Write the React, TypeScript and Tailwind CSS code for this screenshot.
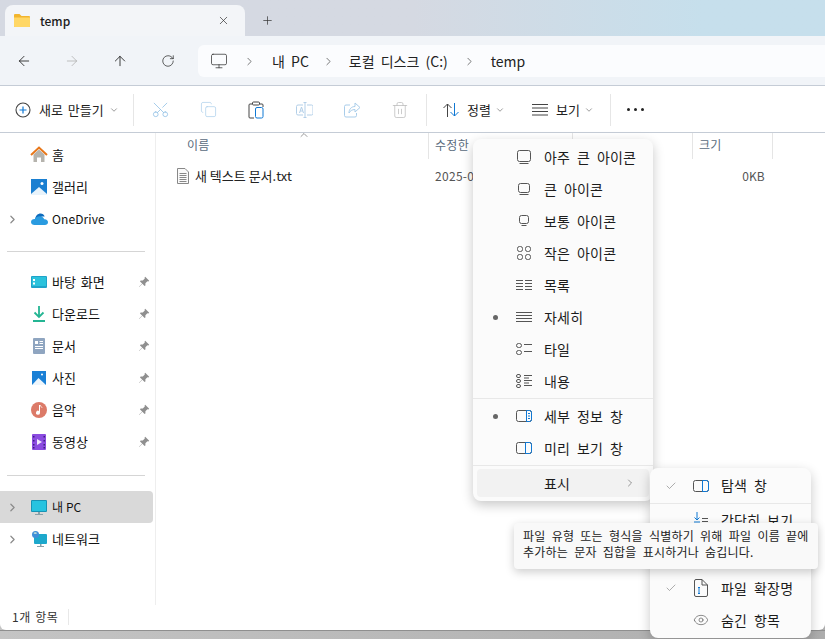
import React from "react";
import { ArrowLeft, ArrowRight, ArrowUp, RotateCw, ChevronRight, ChevronDown, ChevronUp, X, Plus, Scissors, Copy, Trash2, Monitor, Check, Eye } from "lucide-react";

const font = "font-['Noto_Sans_CJK_KR','Noto_Sans',sans-serif]";
const menuText = "text-[14px] tracking-[0.2px] [word-spacing:3.5px] text-[#1c1c1c]";

const Pin = () => (
  <svg width="12" height="12" viewBox="0 0 12 12" className="text-[#8f8f8f]" fill="currentColor">
    <path d="M7.2 0.8 11.2 4.8 10.4 5.4 9.4 5.2 7.4 7.2 7.4 9.4 6.6 10 4.4 7.8 1.2 11 1 10.8 4.2 7.6 2 5.4 2.6 4.6 4.8 4.6 6.8 2.6 6.6 1.6Z" />
  </svg>
);

const HomeIcon = () => (
  <svg width="18" height="18" viewBox="0 0 18 18">
    <path d="M3.5 8.5 9 3.5l5.5 5V16h-3.5v-4.500H7V16H3.500Z" fill="#b5b3ad" />
    <path d="M1 9 9 1.500 17 9" fill="none" stroke="#e8771a" strokeWidth="2" />
  </svg>
);
const GalleryIcon = () => (
  <svg width="16" height="16" viewBox="0 0 16 16">
    <rect width="16" height="16" fill="#1a7fd1" />
    <path d="M0 15 8 8l8 7v1H0Z" fill="#e8f3fb" />
    <circle cx="11" cy="4.500" r="1.500" fill="#fff" />
  </svg>
);
const OneDriveIcon = () => (
  <svg width="17" height="12" viewBox="0 0 17 12">
    <path d="M4 6.500C4.500 2.500 7 .5 9.500.5c2 0 3.500 1 4.200 3C11 3 7 4 6.500 7Z" fill="#0f6cbd" />
    <path d="M3.500 12C1.500 12 0 10.800 0 9c0-2 1.800-3.200 4-3 .8-1.800 2.500-2.800 4.500-2.800 2.200 0 4 1.200 4.800 3C15.500 6 17 7.500 17 9.200 17 11 15.500 12 14 12Z" fill="#2a9be0" />
  </svg>
);
const DesktopIcon = () => (
  <svg width="16" height="12" viewBox="0 0 16 12">
    <rect width="16" height="12" rx="1" fill="#1fa3c9" />
    <rect x="1" y="1" width="14" height="9" fill="#2bc2dc" />
    <rect x="2" y="3" width="2" height="2" fill="#fff" />
    <rect x="2" y="6.500" width="2" height="2" fill="#fff" />
  </svg>
);
const DownloadIcon = () => (
  <svg width="14" height="16" viewBox="0 0 14 16" fill="none" stroke="#24b593" strokeWidth="1.800">
    <path d="M7 0v11M2.500 6.500 7 11l4.500-4.500M1 15h12" />
  </svg>
);
const DocIcon = () => (
  <svg width="12" height="16" viewBox="0 0 12 16">
    <rect width="12" height="16" rx="1" fill="#8fa5c0" />
    <path d="M2 3h3v3H2ZM6.500 3H10v1H6.500ZM6.500 5H10v1H6.500ZM2 8h8v1H2ZM2 10h8v1H2Z" fill="#fff" />
  </svg>
);
const PhotoIcon = () => (
  <svg width="14" height="14" viewBox="0 0 14 14">
    <rect width="14" height="14" fill="#1a80d6" />
    <path d="M0 14 6.500 7l7.500 7Z" fill="#eef6fc" />
    <circle cx="10" cy="3.500" r="1" fill="#fff" />
  </svg>
);
const MusicIcon = () => (
  <svg width="16" height="16" viewBox="0 0 16 16">
    <circle cx="8" cy="8" r="8" fill="#dc7a68" />
    <path d="M8 3h1v7.500A2 2 0 1 1 8 9Z" fill="#fff" />
    <path d="M9 3c.3 1.500 1.500 1.800 2 2.500" fill="none" stroke="#fff" />
  </svg>
);
const VideoIcon = () => (
  <svg width="14" height="16" viewBox="0 0 14 16">
    <rect width="14" height="16" rx="1" fill="#8b4ce0" />
    <path d="M5 5v6l5-3Z" fill="#f0e8fb" />
    <path d="M1 2h1.500v1.500H1ZM1 6h1.500v1.500H1ZM1 10h1.500v1.500H1ZM1 13h1.500v1.500H1ZM11.500 2H13v1.500h-1.500ZM11.500 6H13v1.500h-1.500ZM11.500 10H13v1.500h-1.500ZM11.500 13H13v1.500h-1.500Z" fill="#3d1f80" />
  </svg>
);
const PcIcon = () => (
  <svg width="16" height="15" viewBox="0 0 16 15">
    <rect width="16" height="12" rx="1" fill="#1793b5" />
    <rect x="1" y="1" width="14" height="10" fill="#26c3e0" />
    <path d="M7 12h2v2H7ZM4 14h8v1H4Z" fill="#8aa0a8" />
  </svg>
);
const NetworkIcon = () => (
  <svg width="16" height="16" viewBox="0 0 16 16">
    <rect x="3" y="3" width="13" height="10" rx="1" fill="#1da8cc" />
    <path d="M9 13h1.500v2H9ZM6 15h7v1H6Z" fill="#8aa0a8" />
    <circle cx="4.500" cy="3.500" r="3.500" fill="#3f8fd8" />
    <path d="M2.500 2c1-1 2.500-1 3.500 0-.5 1-2.500 1.500-3.500 0Z" fill="#cfe6d8" />
  </svg>
);

const SideItem = ({ icon, label, pin, chevron, active, latin }: { icon: React.ReactNode; label: string; pin?: boolean; chevron?: boolean; active?: boolean; latin?: boolean }) => (
  <div className={`flex h-8 w-[153px] items-center rounded-r-sm ${active ? "bg-[#d9d9d9]" : ""}`}>
    <div className="flex w-[30px] justify-center">
      {chevron && <ChevronRight size={13} strokeWidth={2.200} className="mr-[5px] text-[#8a8a8a]" />}
    </div>
    <div className="flex w-[18px] justify-center">{icon}</div>
    <span className={`ml-[4px] flex-1 text-[#111] ${latin ? "text-[12px] tracking-[0.1px]" : "text-[13px] [word-spacing:2px]"}`}>{label}</span>
    {pin && <div className="mr-[3px]"><Pin /></div>}
  </div>
);

const ViewGlyph = ({ kind }: { kind: string }) => {
  const s = { fill: "none", stroke: "#555", strokeWidth: 1 };
  if (kind === "xl") return <svg width="16" height="16" viewBox="0 0 16 16" {...s}><rect x="1.500" y="1.500" width="13" height="11" rx="2" /><path d="M3.500 14.500h9" /></svg>;
  if (kind === "l") return <svg width="16" height="16" viewBox="0 0 16 16" {...s}><rect x="2.500" y="2.500" width="11" height="9" rx="2" /><path d="M3.500 13.500h9" /></svg>;
  if (kind === "m") return <svg width="16" height="16" viewBox="0 0 16 16" {...s}><rect x="3.500" y="2.500" width="9" height="8" rx="2" /><path d="M5.500 12.500h5" /></svg>;
  if (kind === "s") return <svg width="16" height="16" viewBox="0 0 16 16" {...s}><rect x="1.500" y="1.500" width="5" height="5" rx="2" /><rect x="9.500" y="1.500" width="5" height="5" rx="2" /><rect x="1.500" y="9.500" width="5" height="5" rx="2" /><rect x="9.500" y="9.500" width="5" height="5" rx="2" /></svg>;
  if (kind === "list") return <svg width="16" height="16" viewBox="0 0 16 16" {...s}><path d="M0 3.500h7M0 6.500h7M0 9.500h7M0 12.500h7M9 3.500h7M9 6.500h7M9 9.500h7M9 12.500h7" /></svg>;
  if (kind === "detail") return <svg width="16" height="16" viewBox="0 0 16 16" {...s}><path d="M0 3.500h16M0 6.500h16M0 9.500h16M0 12.500h16" /></svg>;
  if (kind === "tile") return <svg width="16" height="16" viewBox="0 0 16 16" {...s}><rect x="0.500" y="2.500" width="5" height="4" rx="2" /><rect x="0.500" y="9.500" width="5" height="4" rx="2" /><path d="M8 3.500h8M8 10.500h8" /></svg>;
  if (kind === "content") return <svg width="16" height="16" viewBox="0 0 16 16" {...s}><rect x="0.500" y="1.500" width="4" height="3" rx="1.500" /><rect x="0.500" y="6.500" width="4" height="3" rx="1.500" /><rect x="0.500" y="11.500" width="4" height="3" rx="1.500" /><path d="M8 2.500h8M8 5h5M8 7.500h8M8 10h5M8 12.500h8" /></svg>;
  if (kind === "details")
    return (
      <svg width="16" height="16" viewBox="0 0 16 16" fill="none">
        <rect x="0.500" y="2.500" width="15" height="11" rx="2" stroke="#555" />
        <path d="M10.500 2.500H13.500a2 2 0 0 1 2 2v7a2 2 0 0 1-2 2H10.500Z" stroke="#0f78d4" />
        <path d="M12 5.500h2M12 8h2M12 10.500h2" stroke="#0f78d4" />
      </svg>
    );
  return (
    <svg width="16" height="16" viewBox="0 0 16 16" fill="none">
      <rect x="0.500" y="2.500" width="15" height="11" rx="2" stroke="#555" />
      <path d="M9.500 2.500H13.500a2 2 0 0 1 2 2v7a2 2 0 0 1-2 2H9.500Z" stroke="#0f78d4" />
    </svg>
  );
};

const MenuItem = ({ kind, label, dot }: { kind: string; label: string; dot?: boolean }) => (
  <div className="flex h-8 items-center">
    <div className="flex w-[43px] justify-center">{dot && <div className="ml-[1px] h-[5px] w-[5px] rounded-full bg-[#666]" />}</div>
    <div className="w-4"><ViewGlyph kind={kind} /></div>
    <span className={`ml-[12px] ${menuText}`}>{label}</span>
  </div>
);

const ToolBtn = ({ children }: { children: React.ReactNode }) => (
  <div className="flex w-12 justify-center">{children}</div>
);

export default function App() {
  return (
    <div className={`relative h-[639px] w-[825px] overflow-hidden bg-gradient-to-r from-[#c4c4c4] to-[#adadad] ${font}`}>
      {/* title bar */}
      <div className="flex h-[36px] items-end bg-gradient-to-r from-[#d5d9e2] from-50% to-[#c6dfec] to-85%">
        <div className="ml-[5px] flex h-[31px] w-[240px] items-center rounded-t-lg bg-[#f3f5f8] pl-[9px] pr-[15px]">
          <svg width="16" height="13" viewBox="0 0 16 13">
            <path d="M0 1a1 1 0 0 1 1-1h4.500L7.500 2H15a1 1 0 0 1 1 1v9a1 1 0 0 1-1 1H1a1 1 0 0 1-1-1Z" fill="#f2b52e" />
            <path d="M0 3.500h16V12a1 1 0 0 1-1 1H1a1 1 0 0 1-1-1Z" fill="#ffd766" />
          </svg>
          <span className="ml-[10px] flex-1 text-[12px] font-medium text-[#1c1c1c]">temp</span>
          <X size={13} strokeWidth={1.300} className="text-[#333]" />
        </div>
        <Plus size={13} strokeWidth={1.300} className="mb-[9px] ml-[16px] text-[#333]" />
      </div>

      {/* nav bar */}
      <div className="flex h-[50px] items-center border-b border-[#c5ccd6] bg-[#f1f4f8] pt-[1px]">
        <div className="flex w-[198px] items-center pl-[16px]">
          <ArrowLeft size={16} strokeWidth={1.300} className="text-[#222]" />
          <ArrowRight size={16} strokeWidth={1.100} className="ml-[32px] text-[#aaa]" />
          <ArrowUp size={16} strokeWidth={1.300} className="ml-[32px] text-[#222]" />
          <RotateCw size={14} strokeWidth={1.200} className="ml-[33px] text-[#222]" />
        </div>
        <div className="flex h-[32px] flex-1 items-center rounded-l-md bg-[#fbfcfe] pl-[12px] text-[14px] [word-spacing:3px] text-[#222]">
          <Monitor size={18} strokeWidth={1} className="text-[#333]" />
          <ChevronRight size={13} strokeWidth={1.200} className="ml-[15px] text-[#333]" />
          <span className="ml-[16px]">내 PC</span>
          <ChevronRight size={13} strokeWidth={1.200} className="ml-[13px] text-[#333]" />
          <span className="ml-[14px]">로컬 디스크 (C:)</span>
          <ChevronRight size={13} strokeWidth={1.200} className="ml-[15px] text-[#333]" />
          <span className="ml-[15px]">temp</span>
        </div>
      </div>

      {/* command bar */}
      <div className="flex h-[47px] items-center border-b border-[#c5ccd6] bg-white pt-[1px] text-[13px] [word-spacing:2px] text-[#222]">
        <div className="flex w-[133px] items-center pl-[15px]">
          <svg width="16" height="16" viewBox="0 0 16 16" fill="none">
            <circle cx="8" cy="8" r="7" stroke="#444" strokeWidth="1.100" />
            <path d="M8 4.500v7M4.500 8h7" stroke="#0f78d4" strokeWidth="1.200" />
          </svg>
          <span className="ml-[8px]">새로 만들기</span>
          <ChevronDown size={10} className="ml-[5px] text-[#888]" />
        </div>
        <div className="h-8 w-px bg-[#e6e6e6]" />
        <div className="flex w-[292px] items-center pl-[2px]">
          <ToolBtn><Scissors size={19} strokeWidth={1} className="rotate-[-90deg] text-[#8fbfe6]" /></ToolBtn>
          <ToolBtn><Copy size={17} strokeWidth={1} className="text-[#a9cdea]" /></ToolBtn>
          <ToolBtn>
            <svg width="16" height="18" viewBox="0 0 16 18" fill="none">
              <path d="M4 3H2a1 1 0 0 0-1 1v12a1 1 0 0 0 1 1h4" stroke="#444" />
              <path d="M12 3h2a1 1 0 0 1 1 1v2" stroke="#444" />
              <rect x="4.500" y="1" width="7" height="3" rx="1" stroke="#444" />
              <rect x="7.500" y="6.500" width="7.500" height="10.500" rx="1.500" stroke="#0f78d4" />
            </svg>
          </ToolBtn>
          <ToolBtn>
            <svg width="17" height="16" viewBox="0 0 17 16" fill="none" stroke="#b3cfe8">
              <path d="M7 3H2a1.500 1.500 0 0 0-1.500 1.500v7A1.500 1.500 0 0 0 2 13h5M11 3h4.500A1.500 1.500 0 0 1 17 4.500v7a1.500 1.500 0 0 1-1.500 1.500H11M9 .5v15M7.500.5h3M7.500 15.500h3" />
              <path d="M3.500 11 5.500 5 7.500 11M4.200 9h2.600" />
            </svg>
          </ToolBtn>
          <ToolBtn>
            <svg width="17" height="16" viewBox="0 0 17 16" fill="none" stroke="#a9cdea">
              <path d="M6 3H2a1.500 1.500 0 0 0-1.500 1.500v9A1.500 1.500 0 0 0 2 15h9a1.500 1.500 0 0 0 1.500-1.500V11" />
              <path d="M11 1l5 4.500L11 10V7.500C8 7.500 6 9 5 11c0-4 2.500-6.500 6-6.500Z" />
            </svg>
          </ToolBtn>
          <ToolBtn><Trash2 size={18} strokeWidth={1} className="text-[#bbb]" /></ToolBtn>
        </div>
        <div className="h-8 w-px bg-[#e6e6e6]" />
        <div className="flex w-[183px] items-center text-[#222]">
          <div className="ml-[16px] flex items-center">
            <svg width="16" height="14" viewBox="0 0 16 14" fill="none">
              <path d="M4.500 14V1M.5 5l4-4 4 4" stroke="#444" />
              <path d="M11.500 0v13M7.500 9l4 4 4-4" stroke="#0f78d4" />
            </svg>
            <span className="ml-[8px]">정렬</span>
            <ChevronDown size={10} className="ml-[4px] text-[#888]" />
          </div>
          <div className="ml-[27px] flex items-center">
            <svg width="16" height="12" viewBox="0 0 16 12" fill="none" stroke="#444">
              <path d="M0 .5h16M0 4h16M0 7.500h16M0 11h16" />
            </svg>
            <span className="ml-[8px]">보기</span>
            <ChevronDown size={10} className="ml-[4px] text-[#888]" />
          </div>
        </div>
        <div className="h-8 w-px bg-[#e6e6e6]" />
        <div className="ml-[16px] flex gap-[4px]">
          <div className="h-[3px] w-[3px] rounded-full bg-[#222]" />
          <div className="h-[3px] w-[3px] rounded-full bg-[#222]" />
          <div className="h-[3px] w-[3px] rounded-full bg-[#222]" />
        </div>
      </div>

      {/* main */}
      <div className="flex h-[472px] bg-white">
        <aside className="w-[156px] border-r border-[#eeeeee] pt-[6px]">
          <SideItem icon={<HomeIcon />} label="홈" />
          <SideItem icon={<GalleryIcon />} label="갤러리" />
          <SideItem icon={<OneDriveIcon />} label="OneDrive" chevron latin />
          <div className="mx-[7px] mt-[16px] mb-[14px] h-px w-[138px] bg-[#d5d5d5]" />
          <SideItem icon={<DesktopIcon />} label="바탕 화면" pin />
          <SideItem icon={<DownloadIcon />} label="다운로드" pin />
          <SideItem icon={<DocIcon />} label="문서" pin />
          <SideItem icon={<PhotoIcon />} label="사진" pin />
          <SideItem icon={<MusicIcon />} label="음악" pin />
          <SideItem icon={<VideoIcon />} label="동영상" pin />
          <div className="mx-[7px] mt-[17px] mb-[15px] h-px w-[138px] bg-[#d5d5d5]" />
          <SideItem icon={<PcIcon />} label="내 PC" chevron active latin />
          <SideItem icon={<NetworkIcon />} label="네트워크" chevron />
        </aside>
        <div className="relative flex-1">
          <ChevronUp size={12} strokeWidth={1.200} className="absolute left-[142px] top-[-4px] text-[#555]" />
          <div className="flex h-[26px] items-start text-[12px] tracking-[0.3px] text-[#5a6b7d]">
            <div className="h-full w-[273px] border-r border-[#e5e5e5] pl-[31px] pt-[3px]">이름</div>
            <div className="h-full w-[144px] border-r border-[#e5e5e5] pl-[6px] pt-[3px]">수정한</div>
            <div className="h-full w-[120px] border-r border-[#e5e5e5]" />
            <div className="h-full w-[80px] border-r border-[#e5e5e5] pl-[6px] pt-[3px]">크기</div>
          </div>
          <div className="mt-[5px] flex h-[24px] items-center text-[#222]">
            <div className="flex w-[279px] items-center pl-[21px]">
              <svg width="12" height="16" viewBox="0 0 12 16" fill="none" stroke="#888">
                <path d="M.5.5h7.500l3.500 3.500v11.500H.5Z" fill="#fafafa" />
                <path d="M2.500 5.500h7M2.500 7.500h7M2.500 9.500h7M2.500 11.500h7M2.500 13.500h7" />
              </svg>
              <span className="ml-[6px] text-[13px]">새 텍스트 문서.txt</span>
            </div>
            <span className="text-[12px] tracking-[0.3px] text-[#555]">2025-0</span>
            <span className="ml-[268px] text-[12px] text-[#555]">0KB</span>
          </div>
        </div>
      </div>

      {/* status bar */}
      <div className="flex h-[25px] items-center rounded-b-md border-b border-transparent bg-white pl-[12px] text-[12px] tracking-[0.6px] text-[#333] [word-spacing:1px]">
        1개 항목
        <div className="ml-[10px] h-[16px] w-px bg-[#e8e8e8]" />
      </div>
      <div className="h-px bg-[#8f8f8f]" />

      {/* view menu */}
      <div className="absolute left-[473px] top-[139px] w-[180px] rounded-lg bg-[#fbfbfb] pt-[2px] pb-[4px] shadow-[0_4px_12px_rgba(0,0,0,0.22)]">
        <MenuItem kind="xl" label="아주 큰 아이콘" />
        <MenuItem kind="l" label="큰 아이콘" />
        <MenuItem kind="m" label="보통 아이콘" />
        <MenuItem kind="s" label="작은 아이콘" />
        <MenuItem kind="list" label="목록" />
        <MenuItem kind="detail" label="자세히" dot />
        <MenuItem kind="tile" label="타일" />
        <MenuItem kind="content" label="내용" />
        <div className="my-[1px] h-px bg-[#e8e8e8]" />
        <MenuItem kind="details" label="세부 정보 창" dot />
        <MenuItem kind="preview" label="미리 보기 창" />
        <div className="mt-[1px] mb-[3px] h-px bg-[#e8e8e8]" />
        <div className={`mx-1 flex h-[28px] items-center rounded bg-[#f2f2f2] pl-[67px] ${menuText}`}>
          <span className="flex-1">표시</span>
          <ChevronRight size={12} strokeWidth={1.200} className="mr-[13px] text-[#555]" />
        </div>
      </div>

      {/* sub menu */}
      <div className={`absolute left-[650px] top-[468px] h-[170px] w-[161px] rounded-lg bg-[#fbfbfb] shadow-[0_4px_12px_rgba(0,0,0,0.22)] ${menuText}`}>
        <div className="flex h-[36px] items-center border-b border-[#e8e8e8]">
          <Check size={12} strokeWidth={1.200} className="ml-[15px] text-[#777]" />
          <div className="ml-[16px]"><ViewGlyph kind="preview" /></div>
          <span className="ml-[12px]">탐색 창</span>
        </div>
        <div className="flex h-[32px] items-center">
          <svg width="16" height="16" viewBox="0 0 16 16" fill="none" className="ml-[43px]">
            <path d="M4 0v8M1.500 5.500 4 8l2.500-2.500M1 10h6" stroke="#0f78d4" />
            <path d="M9 6.500h6M9 9.500h6M9 12.500h6" stroke="#555" />
          </svg>
          <span className="ml-[12px]">간단히 보기</span>
        </div>
        <div className="mt-[36px] flex h-[32px] items-center">
          <Check size={12} strokeWidth={1.200} className="ml-[15px] text-[#777]" />
          <svg width="16" height="18" viewBox="0 0 16 18" fill="none" className="ml-[16px]">
            <path d="M9 .5H3A1.500 1.500 0 0 0 1.500 2v14A1.500 1.500 0 0 0 3 17.500h10a1.500 1.500 0 0 0 1.500-1.500V6Z" stroke="#555" />
            <path d="M9 .5V6h5.500" stroke="#555" />
            <path d="M6 8.500v6M5 8.500h2M5 14.500h2" stroke="#0f78d4" />
          </svg>
          <span className="ml-[12px]">파일 확장명</span>
        </div>
        <div className="flex h-[32px] items-center">
          <Eye size={16} strokeWidth={1} className="ml-[43px] text-[#555]" />
          <span className="ml-[12px]">숨긴 항목</span>
        </div>
      </div>

      {/* tooltip */}
      <div className="absolute left-[514px] top-[523px] h-[46px] w-[304px] rounded bg-[#f9f9f9] px-[9px] py-[5px] text-[12px] leading-[16px] tracking-[0.2px] [word-spacing:3.3px] text-[#222] shadow-[0_3px_10px_rgba(0,0,0,0.2)]">
        <div className="whitespace-nowrap">파일 유형 또는 형식을 식별하기 위해 파일 이름 끝에</div>
        <div className="whitespace-nowrap">추가하는 문자 집합을 표시하거나 숨깁니다.</div>
      </div>
    </div>
  );
}
